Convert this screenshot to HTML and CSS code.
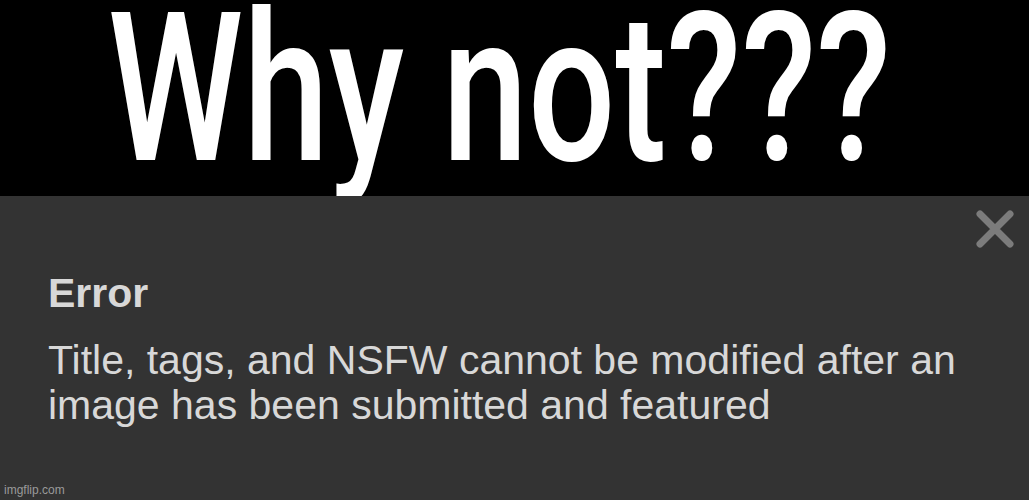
FILE: index.html
```html
<!DOCTYPE html>
<html>
<head>
<meta charset="utf-8">
<link rel="stylesheet" href="styles.css">
</head>
<body>
<div class="meme">
  <div class="banner">
    <div class="headline">Why not???</div>
  </div>
  <div class="panel">
    <div class="close">
      <svg width="38" height="38" viewBox="0 0 38 38"><path d="M4 4 L34 34 M34 4 L4 34" stroke="#7c7c7c" stroke-width="7" stroke-linecap="round"/></svg>
    </div>
    <div class="title">Error</div>
    <div class="message">Title, tags, and NSFW cannot be modified after an<br>image has been submitted and featured</div>
    <div class="watermark">imgflip.com</div>
  </div>
</div>
</body>
</html>
```
FILE: styles.css
```css
html, body { margin: 0; padding: 0; }
body { width: 1029px; height: 500px; overflow: hidden; background: #333; }
.meme { display: flex; flex-direction: column; width: 1029px; height: 500px; }
.banner { height: 196px; background: #000; display: flex; justify-content: center; overflow: hidden; }
.headline {
  font-family: Roboto, sans-serif; font-weight: 500; font-size: 208px; line-height: 196px;
  height: 196px;
  color: #fff; transform: translateX(-15px) scaleX(0.74); transform-origin: center top; white-space: nowrap;
  margin-top: -9px;
}
.panel { position: relative; flex: 1; background: #333; padding: 73px 48px 0; font-family: "Liberation Sans", Arial, sans-serif; color: #d8d8d8; }
.close { position: absolute; top: 14px; right: 15px; }
.title { font-weight: bold; font-size: 41px; line-height: 48px; }
.message { font-size: 41px; line-height: 45px; margin-top: 21px; }
.watermark { position: absolute; left: 4px; bottom: 3px; font-size: 12px; color: #9a9a9a; }
```
